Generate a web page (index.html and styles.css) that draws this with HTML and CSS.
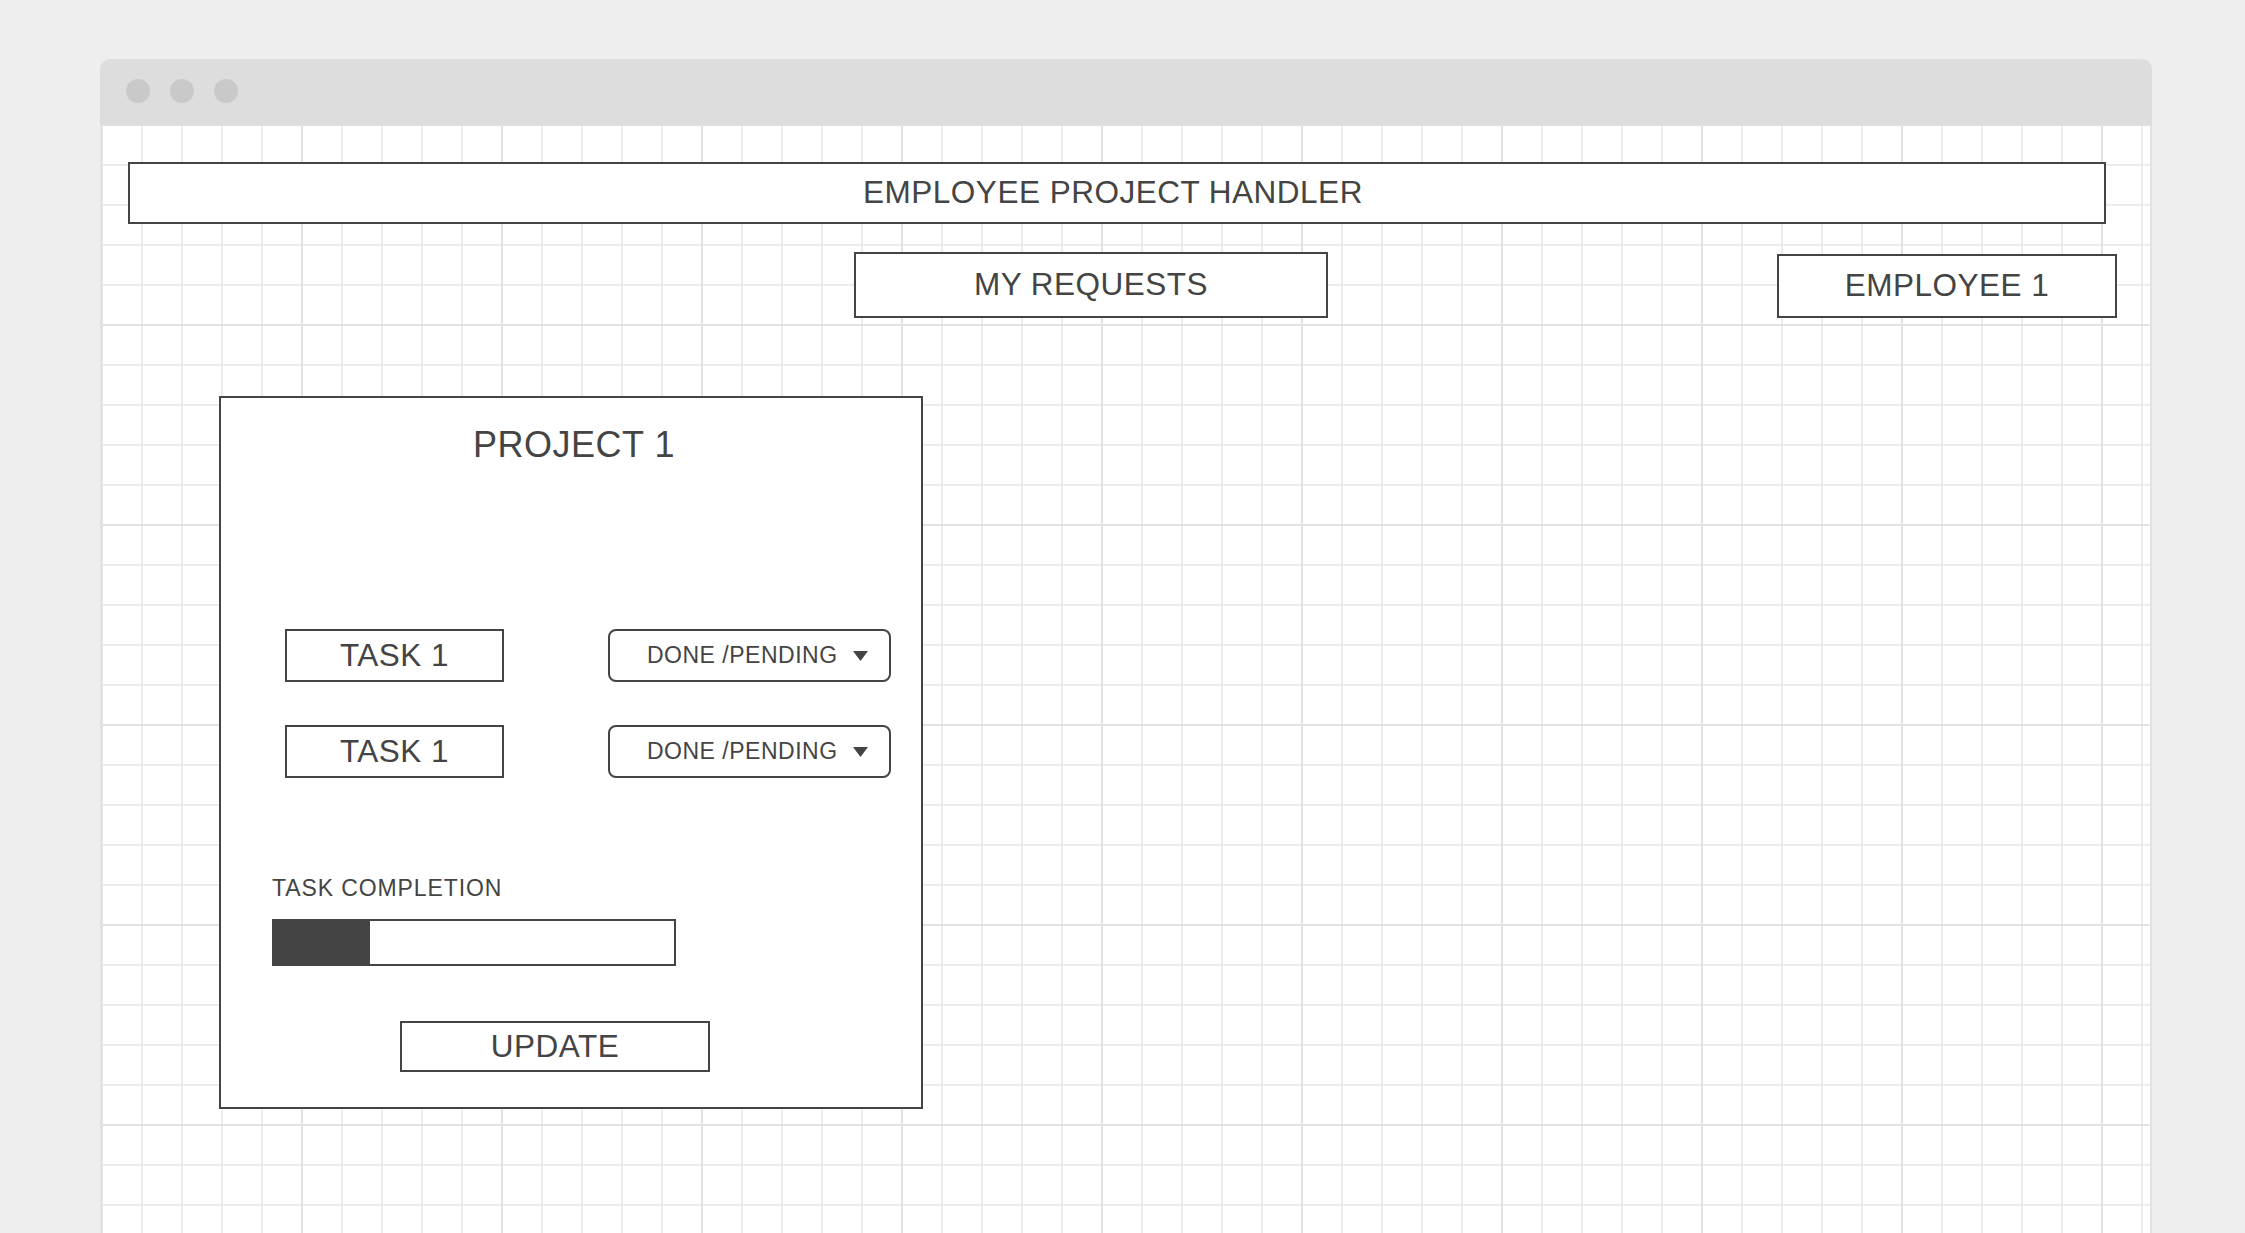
FILE: index.html
```html
<!DOCTYPE html>
<html lang="en">
<head>
<meta charset="utf-8">
<title>Employee Project Handler</title>
<link rel="stylesheet" href="styles.css">
</head>
<body>
<div class="window">
  <div class="titlebar">
    <span class="dot"></span><span class="dot"></span><span class="dot"></span>
  </div>
  <div class="canvas">
    <header class="app-header">EMPLOYEE PROJECT HANDLER</header>
    <nav class="nav">
      <div class="box nav-requests">MY REQUESTS</div>
      <div class="box nav-employee">EMPLOYEE 1</div>
    </nav>
    <section class="card">
      <h2 class="card-title">PROJECT 1</h2>
      <div class="tasks">
        <div class="task-row">
          <div class="box task">TASK 1</div>
          <div class="select">
            <span>DONE /PENDING</span>
            <svg class="caret" width="15" height="10" viewBox="0 0 15 10"><polygon points="0,0 15,0 7.5,10" fill="#444"/></svg>
          </div>
        </div>
        <div class="task-row">
          <div class="box task">TASK 1</div>
          <div class="select">
            <span>DONE /PENDING</span>
            <svg class="caret" width="15" height="10" viewBox="0 0 15 10"><polygon points="0,0 15,0 7.5,10" fill="#444"/></svg>
          </div>
        </div>
      </div>
      <div class="label">TASK COMPLETION</div>
      <div class="progress"><div class="progress-fill" style="width:24%"></div></div>
      <div class="box update">UPDATE</div>
    </section>
  </div>
</div>
</body>
</html>
```

FILE: styles.css
```css
html, body {
  margin: 0;
  padding: 0;
}
body {
  background: #eeeeee;
  height: 1233px;
  overflow: hidden;
  font-family: "Liberation Sans", Arial, sans-serif;
  color: #444444;
  letter-spacing: 0.5px;
}
.window {
  margin: 59px 0 0 100px;
  width: 2052px;
  height: 1200px;
  border-radius: 10px 10px 0 0;
  overflow: hidden;
}
.titlebar {
  height: 66px;
  background: #dddddd;
  display: flex;
  align-items: flex-start;
  gap: 20px;
  padding: 20px 0 0 26px;
  box-sizing: border-box;
}
.dot {
  width: 24px;
  height: 24px;
  border-radius: 50%;
  background: #c9c9c9;
}
.canvas {
  height: 1134px;
  box-sizing: border-box;
  border-left: 2px solid #e2e2e2;
  border-right: 2px solid #e2e2e2;
  padding-top: 37px;
  background-color: #ffffff;
  background-image:
    linear-gradient(to right, #e2e2e2 0, #e2e2e2 2px, transparent 2px),
    linear-gradient(to bottom, #e2e2e2 0, #e2e2e2 2px, transparent 2px),
    linear-gradient(to right, #ececec 0, #ececec 2px, transparent 2px),
    linear-gradient(to bottom, #ececec 0, #ececec 2px, transparent 2px);
  background-size: 200px 200px, 200px 200px, 40px 40px, 40px 40px;
  background-position: -1px -1px;
}
.box {
  box-sizing: border-box;
  border: 2px solid #444444;
  background: #ffffff;
  display: flex;
  align-items: center;
  justify-content: center;
  font-size: 31.5px;
  line-height: 1;
  white-space: nowrap;
}
.app-header {
  box-sizing: border-box;
  margin: 0 44px 0 26px;
  height: 62px;
  border: 2px solid #444444;
  background: #ffffff;
  display: flex;
  align-items: center;
  justify-content: center;
  padding-right: 8px;
  font-size: 31.5px;
  line-height: 1;
}
.nav {
  display: flex;
  align-items: flex-end;
  margin-top: 28px;
  padding-left: 752px;
}
.nav-requests {
  width: 474px;
  height: 66px;
}
.nav-employee {
  margin-left: 449px;
  width: 340px;
  height: 64px;
}
.card {
  box-sizing: border-box;
  margin: 78px 0 0 117px;
  width: 704px;
  height: 713px;
  border: 2px solid #444444;
  background: #ffffff;
  padding-top: 29px;
}
.card-title {
  margin: 0;
  padding-left: 6px;
  text-align: center;
  font-weight: normal;
  font-size: 36px;
  line-height: 36px;
}
.tasks {
  margin-top: 166px;
  display: flex;
  flex-direction: column;
  gap: 43px;
  padding: 0 30px 0 64px;
}
.task-row {
  display: flex;
  justify-content: space-between;
  height: 53px;
}
.task {
  width: 219px;
  height: 53px;
}
.select {
  box-sizing: border-box;
  width: 283px;
  height: 53px;
  border: 2px solid #444444;
  border-radius: 8px;
  display: flex;
  align-items: center;
  padding-left: 37px;
  gap: 15px;
  font-size: 23px;
  line-height: 1;
  white-space: nowrap;
}
.caret {
  display: block;
  margin-top: 1px;
}
.label {
  margin: 99px 0 0 51px;
  font-size: 23px;
  line-height: 23px;
  letter-spacing: 0.9px;
}
.progress {
  box-sizing: border-box;
  margin: 19px 0 0 51px;
  width: 404px;
  height: 47px;
  border: 2px solid #444444;
  background: #ffffff;
}
.progress-fill {
  height: 100%;
  background: #444444;
}
.update {
  margin: 55px 0 0 179px;
  width: 310px;
  height: 51px;
}
```
